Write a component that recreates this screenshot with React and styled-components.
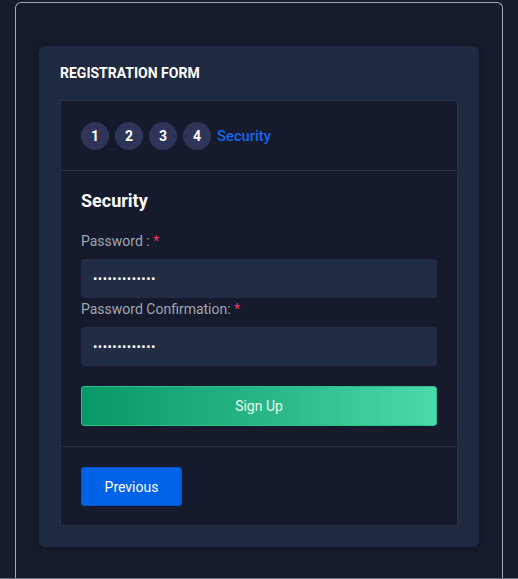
import styled, { createGlobalStyle } from "styled-components";

const GlobalStyle = createGlobalStyle`
  html, body {
    margin: 0;
    padding: 0;
    background: #161b2d;
    font-family: Roboto, "Liberation Sans", sans-serif;
  }
  * { box-sizing: border-box; }
`

const Page = styled.div`
  height: 579px;
  padding: 2px 15px 0;
  border-bottom: 1px solid #6d7280;
`

const Frame = styled.div`
  height: 100%;
  border: 1px solid #a4a9b4;
  border-bottom: none;
  border-radius: 6px 6px 0 0;
  padding: 43px 23px 0;
`

const Card = styled.div`
  background: #1f2940;
  border-radius: 6px;
  padding: 21px;
  box-shadow: 0 0 8px rgba(0, 0, 0, 0.25);
`

const CardTitle = styled.h4`
  margin: 0 0 21px;
  font-size: 14px;
  line-height: 12px;
  font-weight: 700;
  color: #ffffff;
  text-transform: uppercase;
`

const Panel = styled.div`
  background: #151a2c;
  border: 1px solid #282f44;
`

const Section = styled.div`
  padding: ${p => p.$pad || "20px"};
  border-top: ${p => (p.$divided ? "1px solid #282f44" : "none")};
`

const Steps = styled.div`
  display: flex;
  align-items: center;
  gap: 6px;
`

const StepDot = styled.span`
  width: 28px;
  height: 28px;
  border-radius: 50%;
  background: #2e3558;
  color: #ffffff;
  font-size: 14px;
  font-weight: 700;
  display: flex;
  align-items: center;
  justify-content: center;
`

const StepName = styled.span`
  color: #1767eb;
  font-size: 14.8px;
  font-weight: 500;
`

const Heading = styled.h3`
  margin: 0 0 20px;
  font-size: 18px;
  line-height: 20px;
  font-weight: 700;
  color: #ffffff;
`

const Label = styled.label`
  display: block;
  font-size: 14px;
  line-height: 20px;
  color: #a2a6b2;
  margin-bottom: 8px;

  input + & {
    margin-top: 1px;
  }

  span {
    color: #e8365a;
  }
`

const Input = styled.input`
  display: block;
  width: 100%;
  height: 39px;
  border: none;
  border-radius: 4px;
  background: #222c44;
  color: #ffffff;
  padding: 0 12px;
  font-family: inherit;
  font-size: 13px;
  letter-spacing: 0.45px;
  outline: none;
`

const SignUp = styled.button`
  display: block;
  width: 100%;
  height: 40px;
  margin-top: 20px;
  border: 1px solid #2fbf8c;
  border-radius: 3px;
  background: linear-gradient(90deg, #079866 0%, #2bb888 55%, #4bdaa9 100%);
  color: #e6f6ef;
  font-family: inherit;
  font-size: 14px;
`

const Previous = styled.button`
  width: 101px;
  height: 39px;
  border: 1px solid #0a55c4;
  border-radius: 3px;
  background: #0062e6;
  color: #ffffff;
  font-family: inherit;
  font-size: 14px;
`

export default function App() {
  return (
    <>
      <GlobalStyle />
      <Page>
        <Frame>
          <Card>
            <CardTitle>Registration Form</CardTitle>
            <Panel>
              <Section $pad="21px 20px 20px">
                <Steps>
                  {[1, 2, 3, 4].map(n => (
                    <StepDot key={n}>{n}</StepDot>
                  ))}
                  <StepName>Security</StepName>
                </Steps>
              </Section>
              <Section $divided>
                <Heading>Security</Heading>
                <Label>Password : <span>*</span></Label>
                <Input type="password" defaultValue="1234567890123" readOnly />
                <Label>Password Confirmation: <span>*</span></Label>
                <Input type="password" defaultValue="1234567890123" readOnly />
                <SignUp>Sign Up</SignUp>
              </Section>
              <Section $divided $pad="20px 20px 19px">
                <Previous>Previous</Previous>
              </Section>
            </Panel>
          </Card>
        </Frame>
      </Page>
    </>
  );
}
